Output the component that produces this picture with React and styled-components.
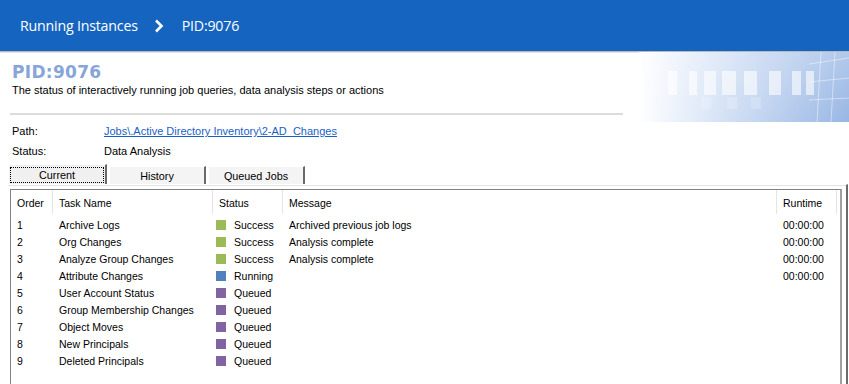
import React from 'react';
import styled, { createGlobalStyle } from 'styled-components';

const GlobalStyle = createGlobalStyle`
  html, body {
    margin: 0;
    padding: 0;
    background: #ffffff;
  }
  body {
    font-family: 'Liberation Sans', Arial, sans-serif;
    font-size: 11px;
    color: #000;
    overflow: hidden;
  }
`;

const tasks = [
  { order: 1, name: 'Archive Logs', status: 'Success', message: 'Archived previous job logs', runtime: '00:00:00' },
  { order: 2, name: 'Org Changes', status: 'Success', message: 'Analysis complete', runtime: '00:00:00' },
  { order: 3, name: 'Analyze Group Changes', status: 'Success', message: 'Analysis complete', runtime: '00:00:00' },
  { order: 4, name: 'Attribute Changes', status: 'Running', message: '', runtime: '00:00:00' },
  { order: 5, name: 'User Account Status', status: 'Queued', message: '', runtime: '' },
  { order: 6, name: 'Group Membership Changes', status: 'Queued', message: '', runtime: '' },
  { order: 7, name: 'Object Moves', status: 'Queued', message: '', runtime: '' },
  { order: 8, name: 'New Principals', status: 'Queued', message: '', runtime: '' },
  { order: 9, name: 'Deleted Principals', status: 'Queued', message: '', runtime: '' },
];

const statusColor = {
  Success: '#9bbb59',
  Running: '#4f81bd',
  Queued: '#8064a2',
};

// column template shared by header and rows
const columns = '42px 160px 70px 494px 60px';

// decorative banner art on the right of the title
const Decor = () => (
  <svg width="210" height="70" viewBox="0 0 210 70">
    <defs>
      <linearGradient id="fade" x1="0" x2="1" y1="0" y2="0">
        <stop offset="0" stopColor="#ffffff" />
        <stop offset="0.35" stopColor="#d9e5f7" />
        <stop offset="1" stopColor="#98b6e4" />
      </linearGradient>
      <linearGradient id="fadeV" x1="0" x2="0" y1="0" y2="1">
        <stop offset="0" stopColor="#ffffff" stopOpacity="0.25" />
        <stop offset="1" stopColor="#ffffff" stopOpacity="0" />
      </linearGradient>
    </defs>
    <rect width="210" height="70" fill="url(#fade)" />
    <rect width="210" height="70" fill="url(#fadeV)" />
    {[
      [29, 9], [50, 8], [65, 12], [83, 14], [105, 13], [130, 12], [153, 9], [167, 8],
    ].map(([x, w]) => (
      <rect key={x} x={x} y="19" width={w} height="24" fill="#ffffff" opacity="0.6" />
    ))}
    {[[62, 10], [88, 10], [112, 10]].map(([x, w]) => (
      <rect key={'l' + x} x={x} y="45" width={w} height="12" fill="#ffffff" opacity="0.2" />
    ))}
    <g stroke="#ffffff" strokeOpacity="0.45" strokeWidth="1" fill="none">
      <path d="M182 0 L178 70" />
      <path d="M196 0 L192 70" />
      <path d="M170 12 L210 6" />
      <path d="M170 30 L210 26" />
      <path d="M170 48 L210 46" />
    </g>
  </svg>
);

const Chevron = () => (
  <svg width="10" height="14" viewBox="0 0 10 14">
    <path d="M2 1.5 L7.5 7 L2 12.5" stroke="#ffffff" strokeWidth="2.6" fill="none" />
  </svg>
);

function App() {
  return (
    <Page>
      <GlobalStyle />
      <TopBar>
        <Crumb>Running Instances</Crumb>
        <Chevron />
        <Crumb>PID:9076</Crumb>
      </TopBar>
      <Banner>
        <Intro>
          <Title>PID:9076</Title>
          <Subtitle>The status of interactively running job queries, data analysis steps or actions</Subtitle>
          <Rule />
        </Intro>
        <DecorBox>
          <Decor />
        </DecorBox>
      </Banner>
      <InfoGrid>
        <span>Path:</span>
        <PathLink href="#">Jobs\.Active Directory Inventory\2-AD_Changes</PathLink>
        <span>Status:</span>
        <span>Data Analysis</span>
      </InfoGrid>
      <Tabs>
        <Tab $active>
          <TabLabel $active>Current</TabLabel>
        </Tab>
        <Tab>
          <TabLabel>History</TabLabel>
        </Tab>
        <Tab>
          <TabLabel>Queued Jobs</TabLabel>
        </Tab>
      </Tabs>
      <Panel>
        <ListBox>
          <HeaderRow>
            <HeadCell>Order</HeadCell>
            <HeadCell>Task Name</HeadCell>
            <HeadCell>Status</HeadCell>
            <HeadCell>Message</HeadCell>
            <HeadCell>Runtime</HeadCell>
          </HeaderRow>
          <Rows>
            {tasks.map((t) => (
              <Row key={t.order}>
                <Cell>{t.order}</Cell>
                <Cell>{t.name}</Cell>
                <StatusCell>
                  <Swatch $color={statusColor[t.status]} />
                  {t.status}
                </StatusCell>
                <Cell>{t.message}</Cell>
                <Cell>{t.runtime}</Cell>
              </Row>
            ))}
          </Rows>
        </ListBox>
      </Panel>
    </Page>
  );
}

const Page = styled.div`
  width: 849px;
  height: 384px;
  display: flex;
  flex-direction: column;
  overflow: hidden;
`;

const TopBar = styled.header`
  height: 51px;
  background: #1565c0;
  display: flex;
  align-items: center;
  padding-left: 20px;
  box-shadow: 0 1px 0 #b9b9b9, 0 2px 0 #e4e4e4;
  flex-shrink: 0;

  svg {
    margin: 0 18px 0 16px;
  }
`;

const Crumb = styled.span`
  font-family: 'Open Sans', 'Noto Sans', sans-serif;
  font-size: 14.2px;
  color: #ffffff;
  letter-spacing: -0.2px;
`;

const Banner = styled.section`
  display: flex;
  justify-content: space-between;
  margin-top: 2px;
`;

const Intro = styled.div`
  padding: 9px 0 0 12px;
  width: 611px;
`;

const Title = styled.h1`
  margin: 0;
  font-family: 'DejaVu Sans', Verdana, sans-serif;
  font-weight: bold;
  font-size: 17px;
  line-height: 20px;
  color: #86a6d8;
  letter-spacing: 0.3px;
`;

const Subtitle = styled.p`
  margin: 2px 0 0;
  font-size: 11px;
  line-height: 13px;
`;

const Rule = styled.div`
  height: 2px;
  background: #dcdcdc;
  margin: 16px 0 0 -2px;
`;

const DecorBox = styled.div`
  width: 210px;
  height: 70px;
  margin-top: -1px;
`;

const InfoGrid = styled.div`
  display: grid;
  grid-template-columns: 92px auto;
  row-gap: 7px;
  padding: 3px 0 0 12px;
  line-height: 13px;
  font-size: 11px;
`;

const PathLink = styled.a`
  color: #1a5fc8;
  text-decoration: underline;
`;

const Tabs = styled.div`
  display: flex;
  align-items: flex-end;
  gap: 2px;
  padding: 6px 0 0 8px;
  height: 20px;
`;

const Tab = styled.div`
  width: ${(p) => (p.$active ? '99px' : '97px')};
  height: ${(p) => (p.$active ? '20px' : '18px')};
  box-sizing: border-box;
  background: ${(p) => (p.$active ? '#f0f0f0' : '#f4f4f4')};
  border-top: 1px solid #ffffff;
  border-left: 1px solid #ffffff;
  border-right: 2px solid #6a6a6a;
  display: flex;
  padding: 2px 1px 1px;
`;

const TabLabel = styled.span`
  flex: 1;
  display: flex;
  align-items: center;
  justify-content: center;
  font-size: 10.8px;
  outline: ${(p) => (p.$active ? '1px dotted #000' : 'none')};
  outline-offset: -1px;
`;

const Panel = styled.div`
  flex: 1;
  margin: 0 1px 0 8px;
  border-top: 1px solid #ffffff;
  border-right: 2px solid #6a6a6a;
  box-shadow: inset 0 1px 0 #e3e3e3;
  padding: 4px 4px 0 2px;
  display: flex;
`;

const ListBox = styled.div`
  flex: 1;
  border-top: 1px solid #828282;
  border-left: 1px solid #828282;
  border-right: 2px solid #a0a0a0;
  background: #ffffff;
  display: flex;
  flex-direction: column;
`;

const HeaderRow = styled.div`
  display: grid;
  grid-template-columns: ${columns};
  height: 24px;
  align-items: stretch;
`;

const HeadCell = styled.div`
  display: flex;
  align-items: center;
  padding: 2px 0 0 6px;
  border-right: 1px solid #e5e5e5;
  font-size: 10.5px;
`;

const Rows = styled.div`
  display: flex;
  flex-direction: column;
  padding-top: 2px;
`;

const Row = styled.div`
  display: grid;
  grid-template-columns: ${columns};
  height: 17px;
  align-items: center;
`;

const Cell = styled.div`
  padding-left: 6px;
  font-size: 10.5px;
  white-space: nowrap;
`;

const StatusCell = styled(Cell)`
  display: flex;
  align-items: center;
  gap: 8px;
  padding-left: 3px;
`;

const Swatch = styled.span`
  width: 10px;
  height: 10px;
  background: ${(p) => p.$color};
  flex-shrink: 0;
`;

export default App;
